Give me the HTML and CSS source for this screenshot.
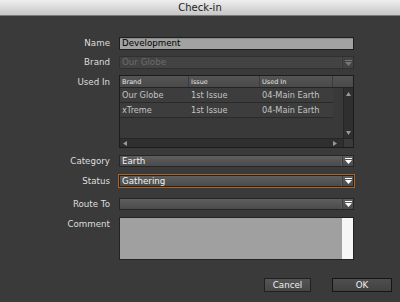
FILE: index.html
```html
<!DOCTYPE html>
<html>
<head>
<meta charset="utf-8">
<link rel="stylesheet" href="styles.css">
</head>
<body>
<div class="window">
  <div class="titlebar">Check-in</div>
  <div class="content">
    <div class="row r-name">
      <div class="label">Name</div>
      <div class="field text">Development</div>
    </div>
    <div class="row r-brand">
      <div class="label">Brand</div>
      <div class="field select disabled"><span class="val">Our Globe</span><span class="arrow"><svg width="7" height="6" viewBox="0 0 7 6"><rect x="0" y="0" width="7" height="1" fill="#777"/><polygon points="0,2 7,2 3.5,6" fill="#777"/></svg></span></div>
    </div>
    <div class="row r-used">
      <div class="label">Used In</div>
      <div class="table">
        <div class="thead">
          <div class="th c1">Brand</div>
          <div class="th c2">Issue</div>
          <div class="th c3">Used In</div>
          <div class="th c4"></div>
        </div>
        <div class="tbody">
          <div class="tr"><div class="td c1">Our Globe</div><div class="td c2">1st Issue</div><div class="td c3">04-Main Earth</div></div>
          <div class="tr"><div class="td c1">xTreme</div><div class="td c2">1st Issue</div><div class="td c3">04-Main Earth</div></div>
        </div>
        <div class="vscroll">
          <svg width="5" height="4" viewBox="0 0 5 4"><polygon points="0,4 5,4 2.5,0" fill="#999"/></svg>
          <svg width="5" height="4" viewBox="0 0 5 4"><polygon points="0,0 5,0 2.5,4" fill="#999"/></svg>
        </div>
        <div class="hscroll">
          <svg width="4" height="5" viewBox="0 0 4 5"><polygon points="4,0 4,5 0,2.5" fill="#999"/></svg>
          <svg width="4" height="5" viewBox="0 0 4 5"><polygon points="0,0 0,5 4,2.5" fill="#999"/></svg>
        </div>
        <div class="corner"></div>
      </div>
    </div>
    <div class="row r-cat">
      <div class="label">Category</div>
      <div class="field select"><span class="val">Earth</span><span class="arrow"><svg width="7" height="6" viewBox="0 0 7 6"><rect x="0" y="0" width="7" height="1" fill="#fff"/><polygon points="0,2 7,2 3.5,6" fill="#fff"/></svg></span></div>
    </div>
    <div class="row r-status">
      <div class="label">Status</div>
      <div class="focus"><div class="field select"><span class="val">Gathering</span><span class="arrow"><svg width="7" height="6" viewBox="0 0 7 6"><rect x="0" y="0" width="7" height="1" fill="#fff"/><polygon points="0,2 7,2 3.5,6" fill="#fff"/></svg></span></div></div>
    </div>
    <div class="row r-route">
      <div class="label">Route To</div>
      <div class="field select"><span class="val"></span><span class="arrow"><svg width="7" height="6" viewBox="0 0 7 6"><rect x="0" y="0" width="7" height="1" fill="#fff"/><polygon points="0,2 7,2 3.5,6" fill="#fff"/></svg></span></div>
    </div>
    <div class="row r-comment">
      <div class="label">Comment</div>
      <div class="comment"><div class="ctext"></div><div class="cstrip"></div></div>
    </div>
    <div class="buttons">
      <div class="btn cancel">Cancel</div>
      <div class="btn ok">OK</div>
    </div>
  </div>
</div>
</body>
</html>
```

FILE: styles.css
```css
html, body {
  margin: 0;
  padding: 0;
  background: #3a3a3a;
}
.window {
  width: 400px;
  height: 302px;
  background: #3a3a3a;
  font-family: "DejaVu Sans", sans-serif;
  overflow: hidden;
}
.titlebar {
  height: 15px;
  border-bottom: 1px solid #7a7a7a;
  background: linear-gradient(#eeeeee, #c6c6c6);
  color: #222;
  font-size: 10px;
  line-height: 15px;
  text-align: center;
}
.content {
  display: flex;
  flex-direction: column;
  padding-top: 21px;
}
.row {
  display: grid;
  grid-template-columns: 110px 235px;
  column-gap: 9px;
  align-items: start;
}
.label {
  text-align: right;
  color: #dedede;
  font-size: 8.7px;
  line-height: 13px;
}
.r-brand { margin-top: 6px; }
.r-used { margin-top: 6px; }
.r-used .label { line-height: 14px; }
.r-cat { margin-top: 7px; }
.r-status { margin-top: 6px; }
.r-status .label { line-height: 14px; }
.r-route { margin-top: 10px; }
.r-comment { margin-top: 6px; }
.r-comment .label { line-height: 14px; }

.field {
  box-sizing: border-box;
  height: 13px;
  font-size: 8.7px;
  line-height: 11px;
  border: 1px solid #1e1e1e;
}
.text {
  background: #a2a2a2;
  color: #000;
  padding-left: 2px;
  box-shadow: inset 0 1px 0 #8a8a8a;
}
.select {
  display: flex;
  background: linear-gradient(#5e5e5e, #4b4b4b);
  color: #f2f2f2;
  border-color: #262626;
}
.select .val {
  flex: 1;
  padding-left: 2px;
}
.select .arrow {
  width: 10px;
  display: flex;
  align-items: center;
  justify-content: center;
  border-left: 1px solid #3c3c3c;
  box-shadow: -1px 0 0 #606060;
}
.disabled {
  background: #434343;
  color: #6c6c6c;
  border-color: #303030;
}
.disabled .arrow {
  border-left-color: #363636;
  box-shadow: -1px 0 0 #4a4a4a;
}
.r-cat .field, .r-route .field { height: 12px; line-height: 10px; }

.focus {
  box-sizing: border-box;
  height: 14px;
  border: 1px solid #b8600f;
  margin-left: -1px;
  margin-right: -1px;
  width: 237px;
}
.focus .field {
  height: 12px;
  line-height: 10px;
  border-color: #1a2330;
}

.table {
  box-sizing: border-box;
  height: 73px;
  border: 1px solid #1c1c1c;
  background: #393939;
  display: grid;
  grid-template-columns: 1fr 10px;
  grid-template-rows: 12px 1fr 9px;
}
.thead {
  grid-column: 1 / 3;
  display: flex;
  background: linear-gradient(#545454, #4a4a4a);
  border-bottom: 1px solid #242424;
}
.th {
  box-sizing: border-box;
  color: #e6e6e6;
  font-size: 6.5px;
  line-height: 12px;
  padding-left: 2px;
  border-right: 1px solid #3c3c3c;
}
.c1 { width: 69px; }
.c2 { width: 71px; }
.c3 { width: 73px; }
.th.c4 { flex: 1; border-right: none; }
.tbody {
  display: flex;
  flex-direction: column;
}
.tr {
  display: flex;
  width: 213px;
  height: 14px;
  background: #3d3d3d;
  border-bottom: 1px solid #2a2a2a;
}
.td {
  box-sizing: border-box;
  color: #c4c4c4;
  font-size: 8.2px;
  line-height: 15px;
  padding-left: 2px;
}
.vscroll {
  background: #2f2f2f;
  border-left: 1px solid #262626;
  display: flex;
  flex-direction: column;
  justify-content: space-between;
  align-items: center;
  padding: 4px 0 3px;
}
.hscroll {
  background: #2f2f2f;
  border-top: 1px solid #262626;
  display: flex;
  justify-content: space-between;
  align-items: center;
  padding: 0 6px 0 3px;
}
.corner {
  background: #3a3a3a;
  border-top: 1px solid #262626;
  border-left: 1px solid #262626;
}

.comment {
  box-sizing: border-box;
  height: 43px;
  border: 1px solid #222;
  display: flex;
}
.ctext {
  flex: 1;
  background: #a0a0a0;
}
.cstrip {
  width: 11px;
  background: #f6f6f6;
}

.buttons {
  display: flex;
  justify-content: flex-end;
  gap: 21px;
  margin-top: 18px;
  padding-right: 8px;
}
.btn {
  box-sizing: border-box;
  height: 14px;
  border: 1px solid #202020;
  background: linear-gradient(#555555, #464646);
  color: #f0f0f0;
  font-size: 8.7px;
  line-height: 12px;
  text-align: center;
}
.cancel { width: 47px; }
.ok {
  width: 60px;
  border-color: #151515;
  background: linear-gradient(#4e4e4e, #424242);
}
```
